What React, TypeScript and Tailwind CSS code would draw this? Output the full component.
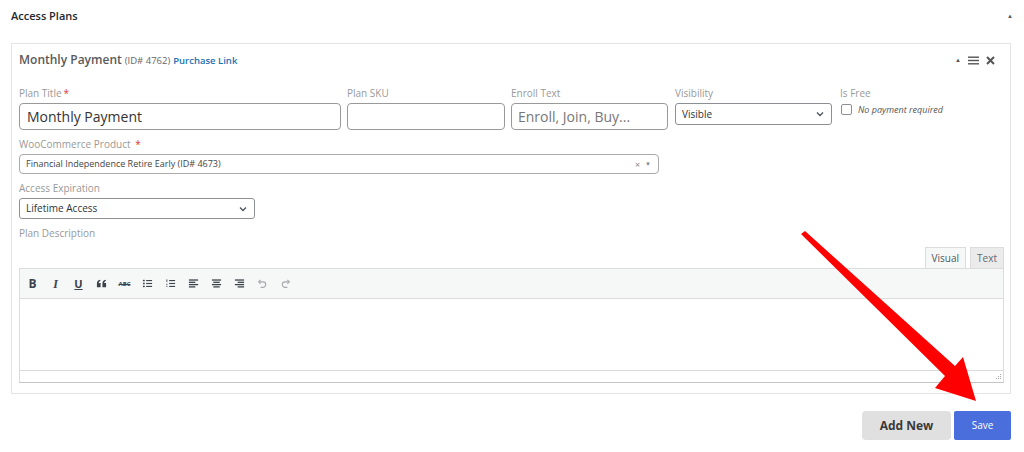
import React from 'react'

const font = { fontFamily: '"Open Sans", "Liberation Sans", sans-serif' }

function Label({ text, required }: { text: string; required?: boolean }) {
  return (
    <div className="text-[10px] leading-[12px] text-[#999] mb-1 whitespace-nowrap">
      {text}
      {required && <span className="text-[#d63638] ml-[2px]">*</span>}
    </div>
  )
}

function Chevron() {
  return (
    <svg width="10" height="10" viewBox="0 0 10 10" fill="none" stroke="#50575e" strokeWidth={1.4}>
      <path d="M2 3.5l3 3 3-3" />
    </svg>
  )
}

// toolbar glyphs (dashicons-ish)
const tb = 'w-[11px] h-[11px]'
const toolbar = [
  <span key="b" className="text-[12px] font-bold text-[#3c434a] leading-none">B</span>,
  <span key="i" className="text-[12px] font-bold italic text-[#3c434a] leading-none" style={{ fontFamily: '"Liberation Serif", serif' }}>I</span>,
  <span key="u" className="text-[11px] font-bold underline text-[#3c434a] leading-none">U</span>,
  <svg key="q" className={tb} viewBox="0 0 12 12" fill="#3c434a">
    <path d="M1 10V6.5C1 4 2 2.5 4.5 2l.4 1C3.6 3.5 3 4.3 3 5.5h2V10H1zM7 10V6.5C7 4 8 2.5 10.5 2l.4 1C9.6 3.5 9 4.3 9 5.5h2V10H7z" />
  </svg>,
  <span key="abc" className="text-[6px] font-bold text-[#3c434a] leading-none line-through">ABC</span>,
  <svg key="ul" className={tb} viewBox="0 0 12 12" fill="#3c434a">
    <rect x="1" y="2" width="2" height="1.6" />
    <rect x="1" y="5.2" width="2" height="1.6" />
    <rect x="1" y="8.4" width="2" height="1.6" />
    <rect x="4.5" y="2.2" width="6.5" height="1.2" />
    <rect x="4.5" y="5.4" width="6.5" height="1.2" />
    <rect x="4.5" y="8.6" width="6.5" height="1.2" />
  </svg>,
  <svg key="ol" className={tb} viewBox="0 0 12 12" fill="#3c434a">
    <rect x="1.6" y="1.5" width="0.9" height="3" />
    <rect x="1.2" y="6.4" width="1.6" height="0.8" />
    <rect x="1.2" y="8.6" width="1.6" height="0.8" />
    <rect x="4.5" y="2.2" width="6.5" height="1.2" />
    <rect x="4.5" y="5.4" width="6.5" height="1.2" />
    <rect x="4.5" y="8.6" width="6.5" height="1.2" />
  </svg>,
  <svg key="al" className={tb} viewBox="0 0 12 12" fill="#3c434a">
    <rect x="1" y="1.5" width="10" height="1.4" />
    <rect x="1" y="4" width="7" height="1.4" />
    <rect x="1" y="6.5" width="10" height="1.4" />
    <rect x="1" y="9" width="7" height="1.4" />
  </svg>,
  <svg key="ac" className={tb} viewBox="0 0 12 12" fill="#3c434a">
    <rect x="1" y="1.5" width="10" height="1.4" />
    <rect x="2.5" y="4" width="7" height="1.4" />
    <rect x="1" y="6.5" width="10" height="1.4" />
    <rect x="2.5" y="9" width="7" height="1.4" />
  </svg>,
  <svg key="ar" className={tb} viewBox="0 0 12 12" fill="#3c434a">
    <rect x="1" y="1.5" width="10" height="1.4" />
    <rect x="4" y="4" width="7" height="1.4" />
    <rect x="1" y="6.5" width="10" height="1.4" />
    <rect x="4" y="9" width="7" height="1.4" />
  </svg>,
  <svg key="un" className={tb} viewBox="0 0 12 12" fill="none" stroke="#a7aaad" strokeWidth={1.2}>
    <path d="M4 2L1.8 4.2 4 6.4" />
    <path d="M2 4.2h4.5a3 3 0 010 6H4" />
  </svg>,
  <svg key="re" className={tb} viewBox="0 0 12 12" fill="none" stroke="#a7aaad" strokeWidth={1.2}>
    <path d="M8 2l2.2 2.2L8 6.4" />
    <path d="M10 4.2H5.5a3 3 0 000 6H8" />
  </svg>,
]

export default function App() {
  return (
    <div className="relative w-[1024px] h-[452px] bg-white overflow-hidden text-[#333]" style={font}>
      <div className="pl-[11px] pr-[13px]">
        {/* section title */}
        <div className="flex items-center justify-between h-[32px] pt-[1px]">
          <span className="text-[11px] font-semibold text-[#23282d]">Access Plans</span>
          <span className="text-[6px] text-[#555] mr-[-2px]">▲</span>
        </div>

        {/* plan card */}
        <div className="mt-[11px] border border-[#e4e4e4] pl-[7px] pr-[6px] pt-[9px] pb-[10px]">
          <div className="flex items-center justify-between h-[14px]">
            <div className="flex items-baseline gap-[3px] whitespace-nowrap">
              <span className="text-[12px] font-semibold text-[#5a5a5a]">Monthly Payment</span>
              <span className="text-[9.5px] text-[#666]">(ID# 4762)</span>
              <span className="text-[9.5px] font-semibold text-[#2271b1]">Purchase Link</span>
            </div>
            <div className="flex items-center gap-[7px] mr-[9px] text-[#555]">
              <span className="text-[6px] leading-none">▲</span>
              <svg width="11" height="9" viewBox="0 0 11 9" fill="#555">
                <rect x="0" y="0.5" width="11" height="1.4" />
                <rect x="0" y="3.8" width="11" height="1.4" />
                <rect x="0" y="7.1" width="11" height="1.4" />
              </svg>
              <svg width="9" height="9" viewBox="0 0 9 9" stroke="#555" strokeWidth={2}>
                <path d="M1 1l7 7M8 1L1 8" />
              </svg>
            </div>
          </div>

          {/* row 1 */}
          <div className="flex mt-[20px]">
            <div className="w-[322px]">
              <Label text="Plan Title" required />
              <div className="h-[27px] border border-[#999] rounded-[4px] px-[7px] flex items-center text-[14px] text-[#333]">
                Monthly Payment
              </div>
            </div>
            <div className="w-[158px] ml-[6px]">
              <Label text="Plan SKU" />
              <div className="h-[27px] border border-[#999] rounded-[4px]" />
            </div>
            <div className="w-[157px] ml-[6px]">
              <Label text="Enroll Text" />
              <div className="h-[27px] border border-[#999] rounded-[4px] px-[6px] flex items-center text-[14px] text-[#777]">
                Enroll, Join, Buy...
              </div>
            </div>
            <div className="w-[157px] ml-[7px]">
              <Label text="Visibility" />
              <div className="h-[22px] border border-[#8c8f94] rounded-[3px] pl-[6px] pr-[6px] flex items-center justify-between text-[10px] text-[#2c3338]">
                <span>Visible</span>
                <Chevron />
              </div>
            </div>
            <div className="ml-[8px]">
              <Label text="Is Free" />
              <div className="flex items-center gap-[6px] mt-[1px]">
                <span className="w-[11px] h-[11px] border border-[#8c8f94] rounded-[2px] ml-[1px]" />
                <span className="text-[9px] italic text-[#555]">No payment required</span>
              </div>
            </div>
          </div>

          {/* product */}
          <div className="mt-[8px] w-[640px]">
            <Label text="WooCommerce Product " required />
            <div className="h-[20px] border border-[#aaa] rounded-[4px] pl-[6px] pr-[7px] flex items-center justify-between text-[9px] text-[#444]">
              <span>Financial Independence Retire Early (ID# 4673)</span>
              <span className="flex items-center gap-[5px] text-[#888]">
                <span className="text-[9px] leading-none">×</span>
                <span className="text-[6px] leading-none">▼</span>
              </span>
            </div>
          </div>

          {/* expiration */}
          <div className="mt-[8px] w-[236px]">
            <Label text="Access Expiration" />
            <div className="h-[21px] border border-[#8c8f94] rounded-[3px] pl-[6px] pr-[6px] flex items-center justify-between text-[10px] text-[#2c3338]">
              <span>Lifetime Access</span>
              <Chevron />
            </div>
          </div>

          {/* description */}
          <div className="mt-[8px]">
            <Label text="Plan Description" />
            <div className="flex justify-end gap-[4px] mt-[8px]">
              <div className="h-[21px] px-[6px] flex items-center text-[10px] text-[#50575e] bg-[#f6f7f7] border border-[#dcdcde] border-b-0 relative z-10 -mb-px">
                Visual
              </div>
              <div className="h-[21px] px-[6px] flex items-center text-[10px] text-[#646970] bg-[#ebebeb] border border-[#dcdcde] border-b-0">
                Text
              </div>
            </div>
            <div className="border border-[#dcdcde] border-b-[#c3c4c7]">
              <div className="h-[30px] bg-[#f6f7f7] border-b border-[#dcdcde] flex items-center pl-[1px]">
                {toolbar.map((t, i) => (
                  <span key={i} className="w-[23px] flex items-center justify-center">
                    {t}
                  </span>
                ))}
              </div>
              <div className="h-[71px] bg-white" />
              <div className="h-[12px] border-t border-[#dcdcde] flex justify-end items-end pr-[2px] pb-[2px]">
                <svg width="6" height="6" viewBox="0 0 6 6" fill="#a7aaad">
                  <rect x="5" y="0" width="1" height="1" />
                  <rect x="3" y="2" width="1" height="1" />
                  <rect x="5" y="2" width="1" height="1" />
                  <rect x="1" y="4" width="1" height="1" />
                  <rect x="3" y="4" width="1" height="1" />
                  <rect x="5" y="4" width="1" height="1" />
                </svg>
              </div>
            </div>
          </div>
        </div>

        {/* actions */}
        <div className="flex justify-end gap-[3px] mt-[17px]">
          <button className="h-[29px] w-[89px] rounded-[4px] bg-[#e0e0e0] text-[12px] font-bold text-[#3a3a3a]">
            Add New
          </button>
          <button className="h-[29px] w-[57px] rounded-[2px] bg-[#4a6fdc] text-[10px] text-white">
            Save
          </button>
        </div>
      </div>

      {/* red annotation arrow */}
      <svg className="absolute left-0 top-0 pointer-events-none" width="1024" height="452" viewBox="0 0 1024 452">
        <polygon points="801,234 805,231 955,366 963,357 976,401 935,388 945,376" fill="#ff0000" />
      </svg>
    </div>
  )
}
